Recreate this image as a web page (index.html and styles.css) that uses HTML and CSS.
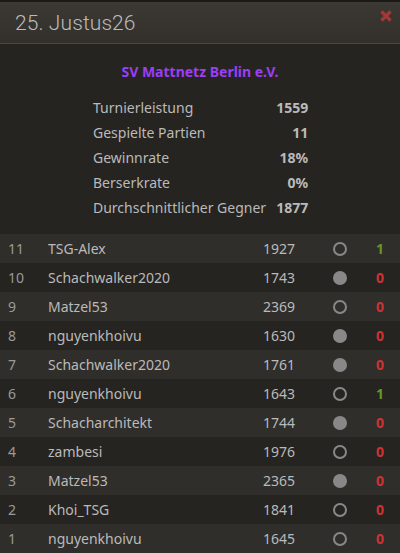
FILE: index.html
```html
<!DOCTYPE html>
<html>
<head>
<meta charset="utf-8">
<link rel="stylesheet" href="styles.css">
</head>
<body>
<div class="panel">
  <div class="header">
    <h2 class="title">25. Justus26</h2>
    <span class="close" title="Schließen"><svg width="12" height="12" viewBox="0 0 12 12"><path d="M1.5 1.5 L10.5 10.5 M10.5 1.5 L1.5 10.5" stroke="#a53737" stroke-width="3.2" stroke-linecap="butt"/></svg></span>
  </div>
  <div class="club">SV Mattnetz Berlin e.V.</div>
  <table class="stats">
    <tr><th>Turnierleistung</th><td>1559</td></tr>
    <tr><th>Gespielte Partien</th><td>11</td></tr>
    <tr><th>Gewinnrate</th><td>18%</td></tr>
    <tr><th>Berserkrate</th><td>0%</td></tr>
    <tr><th>Durchschnittlicher Gegner</th><td>1877</td></tr>
  </table>
  <div class="games">
    <div class="row"><span class="num">11</span><span class="name">TSG-Alex</span><span class="rating">1927</span><span class="color"><i class="dot white"></i></span><span class="res win">1</span></div>
    <div class="row"><span class="num">10</span><span class="name">Schachwalker2020</span><span class="rating">1743</span><span class="color"><i class="dot black"></i></span><span class="res loss">0</span></div>
    <div class="row"><span class="num">9</span><span class="name">Matzel53</span><span class="rating">2369</span><span class="color"><i class="dot white"></i></span><span class="res loss">0</span></div>
    <div class="row"><span class="num">8</span><span class="name">nguyenkhoivu</span><span class="rating">1630</span><span class="color"><i class="dot black"></i></span><span class="res loss">0</span></div>
    <div class="row"><span class="num">7</span><span class="name">Schachwalker2020</span><span class="rating">1761</span><span class="color"><i class="dot black"></i></span><span class="res loss">0</span></div>
    <div class="row"><span class="num">6</span><span class="name">nguyenkhoivu</span><span class="rating">1643</span><span class="color"><i class="dot white"></i></span><span class="res win">1</span></div>
    <div class="row"><span class="num">5</span><span class="name">Schacharchitekt</span><span class="rating">1744</span><span class="color"><i class="dot black"></i></span><span class="res loss">0</span></div>
    <div class="row"><span class="num">4</span><span class="name">zambesi</span><span class="rating">1976</span><span class="color"><i class="dot white"></i></span><span class="res loss">0</span></div>
    <div class="row"><span class="num">3</span><span class="name">Matzel53</span><span class="rating">2365</span><span class="color"><i class="dot black"></i></span><span class="res loss">0</span></div>
    <div class="row"><span class="num">2</span><span class="name">Khoi_TSG</span><span class="rating">1841</span><span class="color"><i class="dot white"></i></span><span class="res loss">0</span></div>
    <div class="row"><span class="num">1</span><span class="name">nguyenkhoivu</span><span class="rating">1645</span><span class="color"><i class="dot white"></i></span><span class="res loss">0</span></div>
  </div>
</div>
</body>
</html>
```
FILE: styles.css
```css
html, body {
  margin: 0;
  padding: 0;
  background: #1c1a18;
  height: 100%;
  overflow: hidden;
}
body {
  font-family: "Noto Sans", "Liberation Sans", sans-serif;
  color: #bababa;
  padding-top: 2px;
  box-sizing: border-box;
}
.panel {
  background: #262421;
  height: 100%;
}
.header {
  height: 41px;
  display: flex;
  align-items: center;
  justify-content: space-between;
  padding: 0 8px 0 15px;
  background: linear-gradient(to bottom, #3c3934, #33302c);
  border-bottom: 1px solid #4b4843;
}
.title {
  margin: 0;
  font-family: Roboto, "Noto Sans", sans-serif;
  font-weight: 300;
  font-size: 21px;
  color: #b9bcbf;
  letter-spacing: 0.1px;
}
.close {
  display: flex;
  align-self: flex-start;
  margin-top: 8px;
}
.club {
  padding-top: 18px;
  line-height: 20px;
  text-align: center;
  font-size: 14px;
  font-weight: 700;
  color: #9a3ef7;
}
.stats {
  margin: 13px auto 0 91px;
  border-collapse: collapse;
  font-size: 14px;
}
.stats th {
  text-align: left;
  font-weight: 400;
  padding: 0 10px 0 2px;
  height: 25px;
  color: #bababa;
}
.stats td {
  text-align: right;
  font-weight: 700;
  padding: 0;
  color: #bababa;
}
.games {
  margin-top: 14px;
}
.row {
  display: grid;
  grid-template-columns: 40px 1fr 75px 60px 20px;
  align-items: center;
  height: 29px;
  padding: 0 10px 0 8px;
  font-size: 14px;
}
.row:nth-child(odd) {
  background: #302e2b;
}
.num {
  color: #9a9a9a;
}
.name {
  color: #bababa;
}
.rating {
  text-align: right;
  padding-right: 15px;
}
.color {
  display: flex;
  justify-content: center;
}
.dot {
  width: 14px;
  height: 14px;
  border-radius: 50%;
  box-sizing: border-box;
}
.dot.white {
  border: 2px solid #888;
}
.dot.black {
  background: #888;
}
.res {
  text-align: center;
  font-weight: 700;
}
.win {
  color: #629924;
}
.loss {
  color: #cc3333;
}
```
